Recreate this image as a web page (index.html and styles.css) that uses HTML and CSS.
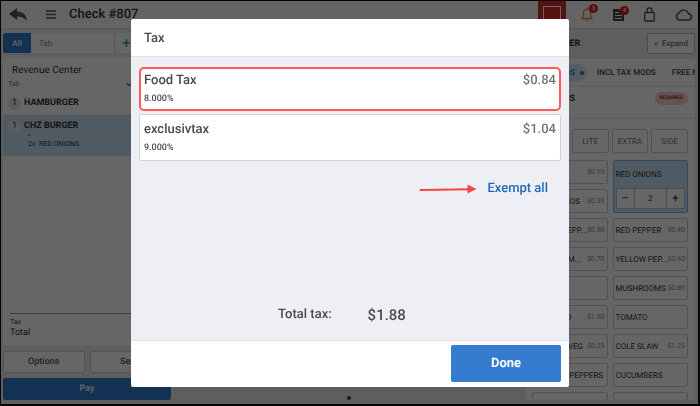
FILE: index.html
```
<!DOCTYPE html>
<html lang="en">
<head>
  <meta charset="UTF-8" />
  <meta name="viewport" content="width=device-width, initial-scale=1.0"/>
  <title>Check #807 - Tax</title>
  <link rel="stylesheet" href="styles.css">
</head>
<body>

  <div class="app">

    <header class="topbar">
      <button class="icon-btn back" aria-label="Back">
        <svg width="19" height="14" viewBox="0 0 19 14"><path d="M8 0v3.500C14 3.500 17.500 7 18 13c-2-3-5-4.500-10-4.500V12L0 6z" fill="#555"/></svg>
      </button>
      <button class="icon-btn menu" aria-label="Menu">
        <svg width="10" height="9" viewBox="0 0 10 9"><path d="M0 1h10M0 4.500h10M0 8h10" stroke="#555" stroke-width="1.500"/></svg>
      </button>
      <h1>Check #807</h1>
      <div class="top-icons">
        <span class="logo"></span>
        <button class="icon-btn bell" aria-label="Alerts">
          <svg width="12" height="15" viewBox="0 0 12 15" fill="none" stroke="#e08a4a" stroke-width="1.300"><path d="M1 11.500h10L9.500 9.500V6C9.500 3.500 8 2.200 6 2.200S2.500 3.500 2.500 6v3.500z"/><path d="M6 .5v1.700M5 13.500h2"/></svg>
          <span class="count">3</span>
        </button>
        <button class="icon-btn notes" aria-label="Orders">
          <svg width="11" height="12" viewBox="0 0 11 12"><path d="M0 0h7l4 4v8H0z" fill="#4a4a4a"/><path d="M2 3.500h4M2 6.500h7M2 9.500h7" stroke="#fff" stroke-width="1.200"/></svg>
          <span class="count">4</span>
        </button>
        <button class="icon-btn lock" aria-label="Lock">
          <svg width="11" height="15" viewBox="0 0 11 15" fill="none" stroke="#4a4a4a" stroke-width="1.300"><rect x=".7" y="5.500" width="9.600" height="8.500" rx="1"/><path d="M3 5.500V3.300a2.500 2.500 0 0 1 5 0v2.200"/></svg>
        </button>
        <button class="icon-btn cloud" aria-label="Sync">
          <svg width="17" height="12" viewBox="0 0 17 12" fill="none" stroke="#4a4a4a" stroke-width="1.400"><path d="M4.500 11h8.700a3 3 0 0 0 .3-6A5 5 0 0 0 4 4.200 3.500 3.500 0 0 0 4.500 11z"/></svg>
        </button>
      </div>
    </header>

    <main class="content">

      <!-- current check -->
      <section class="order">
        <div class="seats">
          <button class="seat-all">All</button>
          <input class="seat-name" type="text" placeholder="Tab" aria-label="Tab name">
          <button class="seat-add" aria-label="Add">+</button>
        </div>
        <div class="check">
          <h2>Revenue Center</h2>
          <div class="tab-row">
            <span>Tab</span>
            <svg width="6" height="5" viewBox="0 0 6 5"><path d="M.5 1l2.500 2.500L5.500 1" fill="none" stroke="#2f7bd0" stroke-width="1.300"/></svg>
          </div>
          <ul class="items">
            <li><span class="qty">1</span><b>HAMBURGER</b></li>
            <li class="selected">
              <span class="qty">1</span>
              <div>
                <b>CHZ BURGER</b>
                <p class="dash">-</p>
                <p class="mod-line">2x&nbsp; RED ONIONS</p>
              </div>
            </li>
          </ul>
          <div class="totals">
            <p class="small">Tax</p>
            <p>Total</p>
          </div>
        </div>
        <div class="actions">
          <button class="plain">Options</button>
          <button class="plain">Send</button>
          <button class="pay">Pay</button>
        </div>
      </section>

      <div class="pager"><span></span></div>

      <!-- modifiers -->
      <section class="mods">
        <div class="mods-head">
          <h2>CHZ BURGER</h2>
          <button class="expand"><span>«</span>Expand</button>
        </div>
        <div class="mods-panel">
          <nav class="mod-tabs">
            <a href="#" class="active">MODS <i></i></a>
            <a href="#">INCL TAX MODS</a>
            <a href="#">FREE MODS</a>
          </nav>
          <div class="group">
            <h3>TOPPINGS</h3>
            <span class="required">REQUIRED</span>
          </div>
          <div class="prefix">
            <button>NO</button>
            <button>LITE</button>
            <button>EXTRA</button>
            <button>SIDE</button>
          </div>
          <div class="mod-grid">
            <button class="mod"><span>PICKLES</span><em>$0.10</em></button>
            <div class="mod picked">
              <span>RED ONIONS</span>
              <div class="stepper">
                <button aria-label="Less">−</button>
                <output>2</output>
                <button aria-label="More">+</button>
              </div>
            </div>
            <button class="mod"><span>JALAPENOS</span><em>$0.30</em></button>
            <button class="mod"><span>GREEN PEPP...</span><em>$0.50</em></button>
            <button class="mod"><span>RED PEPPER</span><em>$0.40</em></button>
            <button class="mod"><span>BUTTON M...</span><em>$0.70</em></button>
            <button class="mod"><span>YELLOW PEP...</span><em>$0.60</em></button>
            <button class="mod"><span>OLIVES</span></button>
            <button class="mod"><span>MUSHROOMS</span><em>$0.80</em></button>
            <button class="mod"><span>AVOCADO</span><em>$1.50</em></button>
            <button class="mod"><span>TOMATO</span></button>
            <button class="mod"><span>GRILLED VEG</span><em>$0.25</em></button>
            <button class="mod"><span>COLE SLAW</span><em>$1.25</em></button>
            <button class="mod"><span>BANANA PEPPERS</span></button>
            <button class="mod"><span>CUCUMBERS</span></button>
            <button class="mod" aria-label="Empty"></button>
            <button class="mod" aria-label="Empty"></button>
          </div>
        </div>
      </section>

    </main>
  </div>

  <div class="overlay">
    <div class="modal" role="dialog" aria-labelledby="taxTitle">
      <h2 class="modal-title" id="taxTitle">Tax</h2>
      <div class="modal-body">
        <button class="tax highlight">
          <span class="tax-name">Food Tax</span>
          <span class="tax-amount">$0.84</span>
          <span class="tax-rate">8.000%</span>
        </button>
        <button class="tax">
          <span class="tax-name">exclusivtax</span>
          <span class="tax-amount">$1.04</span>
          <span class="tax-rate">9.000%</span>
        </button>
        <div class="exempt-row">
          <svg width="58" height="10" viewBox="0 0 58 10"><path d="M1.500 6L50 5.200" stroke="#fb4343" stroke-width="2" stroke-linecap="round"/><path d="M48.500 .5L57.500 5l-9 4.500z" fill="#fb4343"/></svg>
          <button class="exempt">Exempt all</button>
        </div>
        <div class="total">
          <span>Total tax:</span>
          <strong>$1.88</strong>
        </div>
      </div>
      <div class="modal-footer">
        <button class="done">Done</button>
      </div>
    </div>
  </div>

</body>
</html>
```
FILE: styles.css
```
* {
  box-sizing: border-box;
}

body {
  margin: 0;
  height: 100vh;
  padding: 1px 2px 2px 1px;
  background: #0a0a0a;
  color: #333;
  font-family: Roboto, "Liberation Sans", sans-serif;
  font-size: 8px;
  text-rendering: geometricPrecision;
  overflow: hidden;
}

h1, h2, h3, p, ul {
  margin: 0;
  padding: 0;
}

button, input {
  font: inherit;
  color: inherit;
  text-rendering: inherit;
  margin: 0;
  padding: 0;
}

button {
  cursor: pointer;
}

.app {
  height: 100%;
  display: flex;
  flex-direction: column;
  background: #ebebeb;
}

/* top bar */
.topbar {
  display: flex;
  align-items: center;
  height: 28px;
  flex: none;
  padding: 0 6px 0 8px;
  background: #fafafa;
  border-bottom: 1px solid #ddd;
}

.icon-btn {
  position: relative;
  display: flex;
  border: none;
  background: none;
}

.menu {
  margin: 0 13px 0 18px;
}

.topbar h1 {
  font-size: 13px;
  font-weight: 500;
}

.top-icons {
  display: flex;
  align-items: center;
  gap: 20px;
  margin-left: auto;
}

.logo {
  width: 28px;
  height: 28px;
  margin-right: -5px;
  border: 5px solid #d82c2c;
  outline: 1px solid #fff;
  outline-offset: -6px;
  background: #d82c2c;
}

.count {
  position: absolute;
  top: -3px;
  right: -5px;
  width: 9px;
  height: 9px;
  border-radius: 50%;
  background: #e02020;
  color: #fff;
  font-size: 6px;
  line-height: 9px;
  text-align: center;
}

/* layout */
.content {
  display: flex;
  flex: 1;
  min-height: 0;
  padding: 4px 3px 4px 2px;
}

.order {
  display: flex;
  flex-direction: column;
  width: 168px;
}

.seats {
  display: flex;
  height: 20px;
  margin-bottom: 4px;
  background: #fff;
}

.seat-all {
  width: 28px;
  border: none;
  border-radius: 2px 0 0 2px;
  background: #2f7bd0;
  color: #fff;
  font-weight: 500;
}

.seat-name {
  flex: 1;
  min-width: 0;
  padding-left: 8px;
  border: none;
  background: #fff;
}

.seat-name::placeholder {
  color: #999;
}

.seat-add {
  width: 57px;
  padding-left: 7px;
  border: none;
  border-left: 1px solid #ddd;
  background: #fff;
  color: #1fa04a;
  font-size: 15px;
  line-height: 18px;
  text-align: left;
}

.check {
  display: flex;
  flex-direction: column;
  flex: 1;
  background: #fff;
}

.check h2 {
  padding: 7px 9px 0;
  font-size: 10px;
  line-height: 14px;
  font-weight: 400;
}

.tab-row {
  display: flex;
  align-items: center;
  gap: 106px;
  padding: 2px 5px 0;
  font-size: 7px;
  line-height: 8px;
  color: #2f7bd0;
}

.items {
  list-style: none;
}

.items li {
  display: flex;
  gap: 3px;
  padding: 9px 5px 5px;
  font-size: 9px;
  line-height: 13px;
}

.items b {
  font-weight: 700;
}

.items .selected {
  padding: 5px 5px 6px;
  background: #c5e1f5;
}

.qty {
  width: 13px;
  height: 13px;
  border-radius: 50%;
  background: #e8e8e8;
  text-align: center;
}

.dash {
  padding-left: 4px;
  line-height: 6px;
}

.mod-line {
  padding-left: 4px;
  font-size: 7px;
  line-height: 11px;
}

.totals {
  margin: auto 0 0 7px;
  padding: 4px 0 6px;
  border-top: 1px solid #999;
  font-size: 9px;
  line-height: 14px;
}

.totals .small {
  font-size: 7px;
  line-height: 8px;
}

.actions {
  display: grid;
  grid-template-columns: 1fr 1fr;
  gap: 5px;
  padding-top: 5px;
  font-size: 9px;
  font-weight: 500;
}

.plain {
  height: 22px;
  border: 1px solid #ccc;
  border-radius: 2px;
  background: #fff;
  color: #555;
}

.pay {
  grid-column: span 2;
  height: 22px;
  border: none;
  border-radius: 2px;
  background: #2f7bd0;
  color: #fff;
}

.pager {
  display: flex;
  flex: 1;
  align-items: flex-end;
  justify-content: center;
}

.pager span {
  width: 4px;
  height: 4px;
  border-radius: 50%;
  background: #444;
}

/* modifiers */
.mods {
  display: flex;
  flex-direction: column;
  width: 169px;
}

.mods-head {
  display: flex;
  align-items: center;
  justify-content: space-between;
}

.mods-head h2 {
  font-size: 9px;
  font-weight: 700;
}

.expand {
  width: 48px;
  height: 21px;
  border: 1px solid #bbb;
  border-radius: 2px;
  background: #fff;
  color: #555;
}

.expand span {
  margin-right: 4px;
}

.mods-panel {
  flex: 1;
  min-height: 0;
  margin-top: 5px;
  background: #fff;
  overflow: hidden;
}

.mod-tabs {
  display: flex;
  align-items: center;
  gap: 16px;
  height: 28px;
  border-bottom: 1px solid #e2e2e2;
  white-space: nowrap;
}

.mod-tabs a {
  color: #444;
  font-weight: 500;
  text-decoration: none;
}

.mod-tabs .active {
  display: flex;
  align-items: center;
  justify-content: flex-end;
  gap: 5px;
  flex: none;
  width: 61px;
  height: 18px;
  margin-right: -6px;
  padding-right: 3px;
  border-radius: 9px;
  background: #d3e8fa;
  color: #2f7bd0;
}

.mod-tabs i {
  width: 4px;
  height: 4px;
  border-radius: 50%;
  background: #1f9d2f;
}

.group {
  display: flex;
  align-items: center;
  justify-content: space-between;
  height: 32px;
  padding: 0 7px 8px 5px;
  border-bottom: 1px solid #e2e2e2;
}

.group h3 {
  font-size: 9px;
  font-weight: 700;
}

.required {
  padding: 0 5px;
  border-radius: 7px;
  background: #f8d0d0;
  color: #a01c1c;
  font-size: 5px;
  font-weight: 700;
  line-height: 13px;
}

.prefix {
  display: grid;
  grid-template-columns: repeat(4, 1fr);
  gap: 3px;
  padding: 10px 7px 7px 6px;
}

.prefix button {
  height: 24px;
  border: 1px solid #ccc;
  border-radius: 2px;
  background: #fff;
  color: #777;
}

.mod-grid {
  display: grid;
  grid-template-columns: 1fr 1fr;
  grid-auto-rows: 24px;
  gap: 5px;
  padding: 0 7px 0 6px;
}

.mod {
  display: flex;
  align-items: center;
  justify-content: space-between;
  min-width: 0;
  padding: 0 2px;
  border: 1px solid #ccc;
  border-radius: 2px;
  background: #fff;
  white-space: nowrap;
}

.mod em {
  color: #888;
  font-size: 7px;
  font-style: normal;
}

.picked {
  grid-row: span 2;
  flex-direction: column;
  align-items: stretch;
  padding: 9px 2px 3px;
  border-color: #7ab5ea;
  background: #c5e1f5;
}

.stepper {
  display: flex;
  height: 21px;
  border: 1px solid #bbb;
  background: #fff;
  line-height: 19px;
  text-align: center;
}

.stepper button {
  width: 17px;
  border: none;
  background: none;
  font-size: 12px;
}

.stepper output {
  flex: 1;
  border: solid #bbb;
  border-width: 0 1px;
}

/* tax dialog */
.overlay {
  position: fixed;
  inset: 0;
  display: flex;
  align-items: center;
  justify-content: center;
  background: rgba(0, 0, 0, 0.6);
}

.modal {
  width: 438px;
  max-width: 100%;
  border-radius: 2px;
  background: #fff;
  color: #4a4a4a;
  overflow: hidden;
}

.modal-title {
  padding: 2px 13px 0;
  font-size: 13px;
  font-weight: 500;
  line-height: 35px;
}

.modal-body {
  display: flex;
  flex-direction: column;
  gap: 3px;
  padding: 10px 8px 15px;
  background: #edeff4;
  border-top: 1px solid #e4e6ea;
  border-bottom: 1px solid #e0e0e4;
}

.tax {
  display: grid;
  grid-template-columns: 1fr auto;
  align-content: start;
  height: 47px;
  padding: 6px 4px;
  border: 1px solid #d0d4da;
  border-radius: 2px;
  background: #fff;
  text-align: left;
}

.highlight {
  height: 44px;
  padding: 3px;
  border: 2px solid #f95a5a;
  border-radius: 5px;
}

.tax-name,
.tax-amount {
  font-size: 13px;
  font-weight: 500;
  line-height: 18px;
}

.tax-amount {
  color: #757575;
}

.tax-rate {
  font-size: 9px;
  font-weight: 500;
  line-height: 18px;
}

.exempt-row {
  display: flex;
  align-items: center;
  justify-content: flex-end;
  gap: 10px;
  padding: 16px 13px 0 0;
}

.exempt {
  border: none;
  background: none;
  color: #1f69b8;
  font-size: 13px;
  font-weight: 500;
  line-height: 18px;
}

.total {
  display: flex;
  align-items: center;
  gap: 36px;
  padding: 104px 0 0 139px;
  font-size: 13px;
  line-height: 20px;
}

.total span {
  font-weight: 500;
}

.total strong {
  font-size: 15px;
  font-weight: 500;
}

.modal-footer {
  display: flex;
  justify-content: flex-end;
  padding: 4px 8px 5px;
}

.done {
  width: 110px;
  height: 37px;
  border: none;
  border-radius: 2px;
  background: #357bce;
  color: #fff;
  font-size: 13px;
  font-weight: 700;
}
```
